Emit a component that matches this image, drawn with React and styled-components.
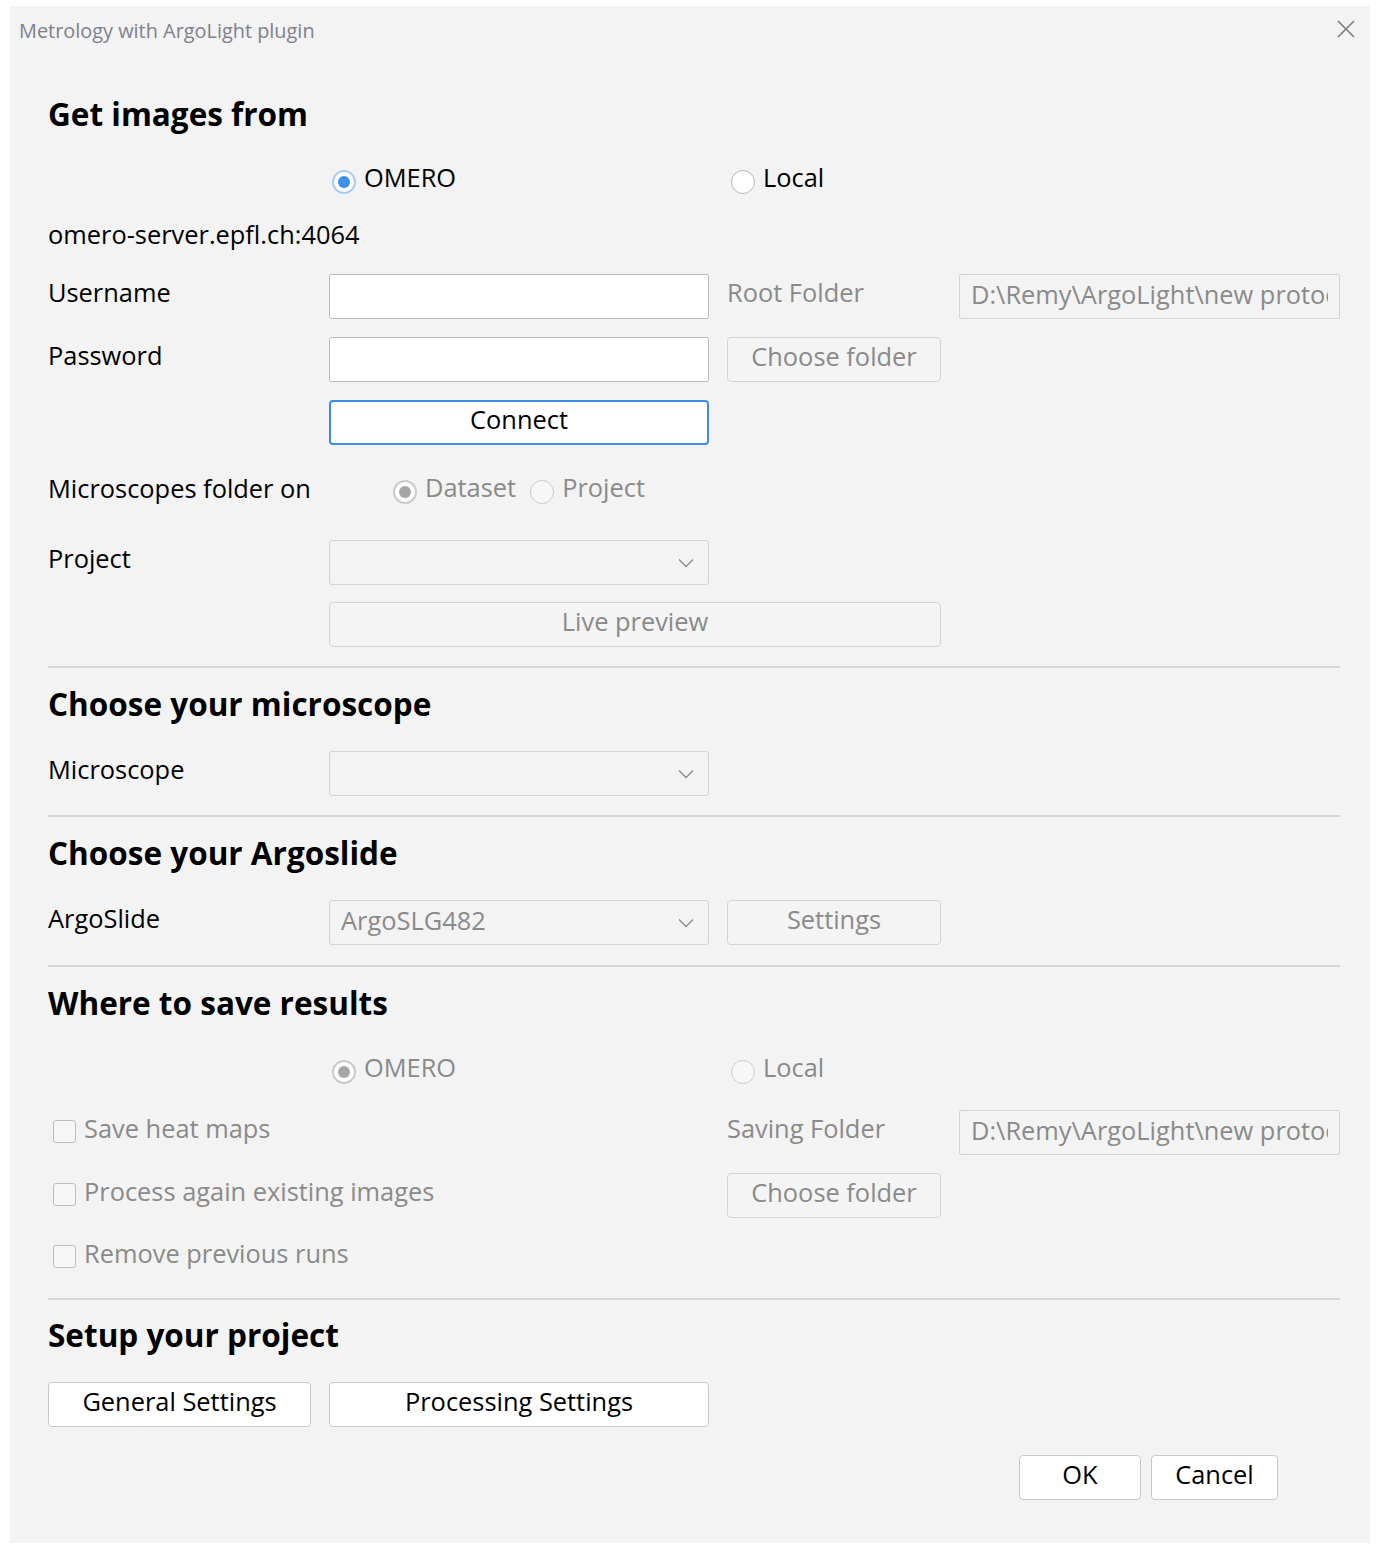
import React from "react";
import styled, { createGlobalStyle, css } from "styled-components";

const GlobalStyle = createGlobalStyle`
  html, body {
    margin: 0;
    padding: 0;
    background: #fff;
  }
  body {
    font-family: "Open Sans", "Noto Sans", "Liberation Sans", sans-serif;
  }
`;

const COLORS = {
  bg: "#f3f3f3",
  text: "#000",
  disabled: "#8a8a8a",
  border: "#c9c9c9",
  borderLight: "#d3d3d3",
  blue: "#3c8ee6",
};

const FONT = 25.4;

const Dialog = styled.div`
  box-sizing: border-box;
  margin: 6px 8px 8px 10px;
  width: 1360px;
  height: 1537px;
  background: ${COLORS.bg};
  display: flex;
  flex-direction: column;
`;

const TitleBar = styled.div`
  height: 54px;
  display: flex;
  align-items: center;
  justify-content: space-between;
  padding: 0 14px 0 9px;
  box-sizing: border-box;
  span {
    font-size: 19.9px;
    color: #80808e;
    margin-top: -6px;
  }
  svg {
    margin-top: -8px;
  }
`;

const CloseIcon = () => (
  <svg width="20" height="20" viewBox="0 0 20 20">
    <path d="M2 2 L18 18 M18 2 L2 18" stroke="#7a7a7a" strokeWidth="1.6" fill="none" />
  </svg>
);

const Content = styled.div`
  padding: 0 30px 0 38px;
  display: flex;
  flex-direction: column;
`;

const Heading = styled.h2`
  margin: ${(p) => p.$mt}px 0 0;
  height: 40px;
  line-height: 40px;
  font-size: 31.5px;
  font-weight: 700;
  color: ${COLORS.text};
`;

const Row = styled.div`
  margin-top: ${(p) => p.$mt}px;
  height: ${(p) => p.$h || 44}px;
  display: grid;
  grid-template-columns: 263px 380px 214px 381px;
  column-gap: 18px;
  align-items: start;
`;

const Label = styled.div`
  font-size: ${FONT}px;
  line-height: 36px;
  white-space: nowrap;
  color: ${(p) => (p.$disabled ? COLORS.disabled : COLORS.text)};
  grid-column: ${(p) => p.$col || "auto"};
`;

const Separator = styled.div`
  margin-top: ${(p) => p.$mt}px;
  height: 2px;
  background: #d6d6d6;
`;

const fieldBase = css`
  box-sizing: border-box;
  height: 45px;
  border-radius: 2px;
  font-size: ${FONT}px;
  display: flex;
  align-items: center;
`;

const TextField = styled.div`
  ${fieldBase};
  background: ${(p) => (p.$disabled ? COLORS.bg : "#fff")};
  border: 1.5px solid ${(p) => (p.$disabled ? COLORS.borderLight : "#bdbdbd")};
  color: ${COLORS.disabled};
  padding: 0 11px;
  grid-column: ${(p) => p.$col || "auto"};
  span {
    display: block;
    overflow: hidden;
    white-space: nowrap;
    line-height: 36px;
    margin-top: -6px;
  }
`;

const Combo = styled.div`
  ${fieldBase};
  background: ${COLORS.bg};
  border: 1.5px solid ${COLORS.borderLight};
  border-radius: 3px;
  justify-content: space-between;
  padding: 0 14px 0 11px;
  color: ${COLORS.disabled};
  span {
    line-height: 36px;
    margin-top: -6px;
  }
`;

const Chevron = () => (
  <svg width="16" height="10" viewBox="0 0 16 10">
    <path d="M1 1.5 L8 8.5 L15 1.5" stroke="#8c8c8c" strokeWidth="1.4" fill="none" />
  </svg>
);

const Button = styled.button`
  ${fieldBase};
  justify-content: center;
  font-family: inherit;
  padding: 0;
  margin: 0;
  border-radius: 4px;
  line-height: 36px;
  cursor: default;
  grid-column: ${(p) => p.$col || "auto"};
  width: ${(p) => (p.$w ? `${p.$w}px` : "auto")};
  span {
    margin-top: -8px;
  }
  ${(p) =>
    p.$variant === "primary"
      ? css`
          background: #fff;
          border: 2.5px solid ${COLORS.blue};
          color: ${COLORS.text};
        `
      : p.$variant === "disabled"
      ? css`
          background: #f4f4f4;
          border: 1.5px solid ${COLORS.borderLight};
          color: ${COLORS.disabled};
        `
      : css`
          background: #fff;
          border: 1.5px solid ${COLORS.border};
          color: ${COLORS.text};
        `}
`;

const RadioGroup = styled.div`
  display: flex;
  gap: ${(p) => p.$gap || 0}px;
  margin-top: ${(p) => p.$mt || 0}px;
  justify-content: ${(p) => (p.$center ? "center" : "flex-start")};
  grid-column: ${(p) => p.$col || "auto"};
`;

const RadioItem = styled.label`
  display: flex;
  align-items: center;
  gap: 8px;
  font-size: ${FONT}px;
  line-height: 36px;
  margin-left: ${(p) => p.$ml || 0}px;
  color: ${(p) => (p.$disabled ? COLORS.disabled : COLORS.text)};
  span:last-child {
    margin-top: -4px;
  }
`;

const RadioDot = styled.span`
  box-sizing: border-box;
  width: 24px;
  height: 24px;
  border-radius: 50%;
  margin-top: 6px;
  flex-shrink: 0;
  display: flex;
  align-items: center;
  justify-content: center;
  background: #fff;
  ${(p) =>
    p.$checked
      ? css`
          border: 2px solid ${p.$disabled ? "#cbcbcb" : "#a9cdf3"};
          &::after {
            content: "";
            width: 12px;
            height: 12px;
            border-radius: 50%;
            background: ${p.$disabled ? "#a6a6a6" : "#3f90ea"};
          }
        `
      : css`
          border: 1.5px solid ${p.$disabled ? "#cbcbcb" : "#b6b6b6"};
          background: ${p.$disabled ? "#f7f7f7" : "#fff"};
        `}
`;

const Radio = ({ label, checked, disabled, ml }) => (
  <RadioItem $disabled={disabled} $ml={ml}>
    <RadioDot $checked={checked} $disabled={disabled} />
    <span>{label}</span>
  </RadioItem>
);

const CheckItem = styled.label`
  display: flex;
  align-items: center;
  gap: 8px;
  padding-left: 5px;
  font-size: ${FONT}px;
  line-height: 36px;
  white-space: nowrap;
  color: ${COLORS.disabled};
  grid-column: 1 / span 2;
`;

const CheckBox = styled.span`
  box-sizing: border-box;
  width: 23px;
  height: 23px;
  margin-top: 6px;
  border: 1.5px solid #bdbdbd;
  border-radius: 3px;
  background: #f6f6f6;
`;

const Check = ({ label }) => (
  <CheckItem>
    <CheckBox />
    <span>{label}</span>
  </CheckItem>
);

const FooterRow = styled.div`
  margin-top: ${(p) => p.$mt}px;
  display: flex;
  justify-content: flex-end;
  gap: 10px;
  padding-right: 62px;
`;

const ButtonRow = styled.div`
  margin-top: ${(p) => p.$mt}px;
  display: flex;
  gap: 18px;
`;

const Spacer = styled.div``;

export default function App() {
  return (
    <>
      <GlobalStyle />
      <Dialog>
        <TitleBar>
          <span>Metrology with ArgoLight plugin</span>
          <CloseIcon />
        </TitleBar>
        <Content>
          <Heading $mt={34}>Get images from</Heading>
          <Row $mt={29} $h={36}>
            <Spacer />
            <RadioGroup>
              <Radio label="OMERO" checked ml={3} />
            </RadioGroup>
            <RadioGroup $col="3 / span 2">
              <Radio label="Local" ml={4} />
            </RadioGroup>
          </Row>
          <Row $mt={17} $h={36}>
            <Label $col="1 / span 2">omero-server.epfl.ch:4064</Label>
          </Row>
          <Row $mt={22}>
            <Label>Username</Label>
            <TextField />
            <Label $disabled>Root Folder</Label>
            <TextField $disabled>
              <span>D:\Remy\ArgoLight\new protocol\images</span>
            </TextField>
          </Row>
          <Row $mt={19}>
            <Label>Password</Label>
            <TextField />
            <Button $variant="disabled">
              <span>Choose folder</span>
            </Button>
          </Row>
          <Row $mt={19}>
            <Spacer />
            <Button $variant="primary">
              <span>Connect</span>
            </Button>
          </Row>
          <Row $mt={26} $h={36}>
            <Label>Microscopes folder on</Label>
            <RadioGroup $center $gap={14} $mt={3}>
              <Radio label="Dataset" checked disabled />
              <Radio label="Project" disabled />
            </RadioGroup>
          </Row>
          <Row $mt={34}>
            <Label>Project</Label>
            <Combo>
              <span />
              <Chevron />
            </Combo>
          </Row>
          <Row $mt={18}>
            <Spacer />
            <Button $variant="disabled" $col="2 / span 2">
              <span>Live preview</span>
            </Button>
          </Row>
          <Separator $mt={20} />

          <Heading $mt={16}>Choose your microscope</Heading>
          <Row $mt={27}>
            <Label>Microscope</Label>
            <Combo>
              <span />
              <Chevron />
            </Combo>
          </Row>
          <Separator $mt={20} />

          <Heading $mt={16}>Choose your Argoslide</Heading>
          <Row $mt={27}>
            <Label>ArgoSlide</Label>
            <Combo>
              <span>ArgoSLG482</span>
              <Chevron />
            </Combo>
            <Button $variant="disabled">
              <span>Settings</span>
            </Button>
          </Row>
          <Separator $mt={21} />

          <Heading $mt={16}>Where to save results</Heading>
          <Row $mt={30} $h={36}>
            <Spacer />
            <RadioGroup>
              <Radio label="OMERO" checked disabled ml={3} />
            </RadioGroup>
            <RadioGroup $col="3 / span 2">
              <Radio label="Local" disabled ml={4} />
            </RadioGroup>
          </Row>
          <Row $mt={21}>
            <Check label="Save heat maps" />
            <Label $disabled>Saving Folder</Label>
            <TextField $disabled>
              <span>D:\Remy\ArgoLight\new protocol\results</span>
            </TextField>
          </Row>
          <Row $mt={19}>
            <Check label="Process again existing images" />
            <Button $variant="disabled">
              <span>Choose folder</span>
            </Button>
          </Row>
          <Row $mt={18} $h={36}>
            <Check label="Remove previous runs" />
          </Row>
          <Separator $mt={27} />

          <Heading $mt={15}>Setup your project</Heading>
          <ButtonRow $mt={27}>
            <Button $w={263}>
              <span>General Settings</span>
            </Button>
            <Button $w={380}>
              <span>Processing Settings</span>
            </Button>
          </ButtonRow>
          <FooterRow $mt={28}>
            <Button $w={122}>
              <span>OK</span>
            </Button>
            <Button $w={127}>
              <span>Cancel</span>
            </Button>
          </FooterRow>
        </Content>
      </Dialog>
    </>
  );
}
